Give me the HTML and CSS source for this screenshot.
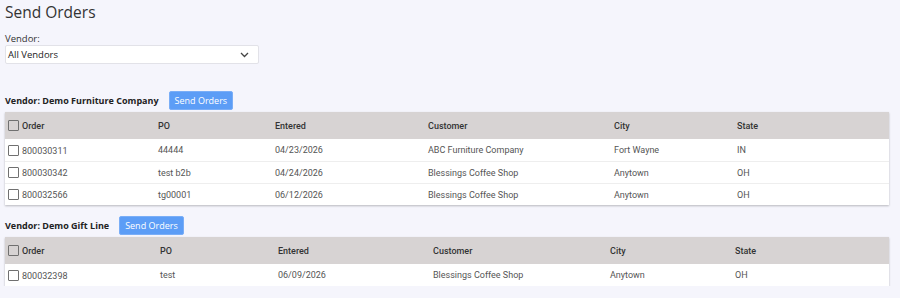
FILE: index.html
```html
<!DOCTYPE html>
<html lang="en">
<head>
  <meta charset="UTF-8">
  <meta name="viewport" content="width=device-width, initial-scale=1.0">
  <title>Send Orders</title>
  <link rel="stylesheet" href="styles.css">
</head>
<body>
  <h1 class="page-title">Send Orders</h1>

  <div class="filter">
    <label for="vendor">Vendor:</label>
    <div class="select">
      <span>All Vendors</span>
      <svg class="chevron" width="9" height="6" viewBox="0 0 9 6"><path d="M1 1l3.5 3.5L8 1" fill="none" stroke="#444" stroke-width="1.3"/></svg>
    </div>
  </div>

  <div class="vendor-block first">
    <div class="vendor-head">
      <span class="vendor-name">Vendor: Demo Furniture Company</span>
      <button type="button" class="send-btn">Send Orders</button>
    </div>
    <table class="orders orders-a">
      <colgroup><col><col><col><col><col><col></colgroup>
      <thead>
        <tr><th><span class="check"></span>Order</th><th>PO</th><th>Entered</th><th>Customer</th><th>City</th><th>State</th></tr>
      </thead>
      <tbody>
        <tr><td><span class="check"></span>800030311</td><td>44444</td><td>04/23/2026</td><td>ABC Furniture Company</td><td>Fort Wayne</td><td>IN</td></tr>
        <tr><td><span class="check"></span>800030342</td><td>test b2b</td><td>04/24/2026</td><td>Blessings Coffee Shop</td><td>Anytown</td><td>OH</td></tr>
        <tr><td><span class="check"></span>800032566</td><td>tg00001</td><td>06/12/2026</td><td>Blessings Coffee Shop</td><td>Anytown</td><td>OH</td></tr>
      </tbody>
    </table>
  </div>

  <div class="vendor-block">
    <div class="vendor-head">
      <span class="vendor-name">Vendor: Demo Gift Line</span>
      <button type="button" class="send-btn">Send Orders</button>
    </div>
    <table class="orders orders-b">
      <colgroup><col><col><col><col><col><col></colgroup>
      <thead>
        <tr><th><span class="check"></span>Order</th><th>PO</th><th>Entered</th><th>Customer</th><th>City</th><th>State</th></tr>
      </thead>
      <tbody>
        <tr><td><span class="check"></span>800032398</td><td>test</td><td>06/09/2026</td><td>Blessings Coffee Shop</td><td>Anytown</td><td>OH</td></tr>
      </tbody>
    </table>
  </div>
</body>
</html>
```

FILE: styles.css
```css
body {
  margin: 0;
  padding: 0 11px 0 5px;
  background-color: #f5f5fc;
  font-family: "Open Sans", sans-serif;
  color: #222;
}

.page-title {
  margin: 0;
  padding-top: 1px;
  font-size: 15.5px;
  font-weight: 400;
  line-height: 22px;
  color: #333;
}

.filter {
  margin-top: 10px;
}

.filter label {
  display: block;
  font-size: 9.5px;
  line-height: 12px;
  color: #333;
}

.select {
  width: 254px;
  height: 19px;
  padding: 0 9px 0 2px;
  box-sizing: border-box;
  display: flex;
  align-items: center;
  justify-content: space-between;
  background-color: #fff;
  border: 1px solid #e2e2e8;
  border-radius: 2px;
  font-size: 9.5px;
  color: #222;
}

.vendor-block {
  margin-top: 10px;
}

.vendor-block.first {
  margin-top: 26px;
}

.vendor-head {
  display: flex;
  align-items: center;
  gap: 10px;
  height: 20px;
  margin-bottom: 2px;
}

.vendor-name {
  font-size: 9px;
  font-weight: 700;
  color: #222;
}

.send-btn {
  height: 19px;
  padding: 0 5px;
  border: 1px solid #7aaef7;
  border-radius: 2px;
  background-color: #5c9df6;
  color: #fff;
  font-family: "Open Sans", sans-serif;
  font-size: 9px;
}

.orders {
  width: 884px;
  table-layout: fixed;
  border-collapse: collapse;
  background-color: #fff;
  box-shadow: 0 1px 2px rgba(0, 0, 0, 0.25);
  font-family: Roboto, sans-serif;
  font-size: 9px;
}

.orders th {
  height: 27px;
  padding: 0 3px;
  background-color: #d7d3d3;
  text-align: left;
  font-weight: 500;
  color: #333;
}

.orders td {
  height: 21px;
  padding: 0 3px;
  border-top: 1px solid #eeeeee;
  color: #555;
}

.orders tbody tr:first-child td {
  border-top: none;
  height: 22px;
}

.check {
  display: inline-block;
  width: 9px;
  height: 9px;
  margin-right: 3px;
  vertical-align: -2px;
  border: 1px solid #707070;
  border-radius: 1px;
  background-color: #fff;
}

.orders th .check {
  background-color: transparent;
}

.orders-a col:nth-child(1) { width: 150px; }
.orders-a col:nth-child(2) { width: 117px; }
.orders-a col:nth-child(3) { width: 153px; }
.orders-a col:nth-child(4) { width: 186px; }
.orders-a col:nth-child(5) { width: 123px; }

.orders-b col:nth-child(1) { width: 152px; }
.orders-b col:nth-child(2) { width: 118px; }
.orders-b col:nth-child(3) { width: 155px; }
.orders-b col:nth-child(4) { width: 177px; }
.orders-b col:nth-child(5) { width: 125px; }
```
